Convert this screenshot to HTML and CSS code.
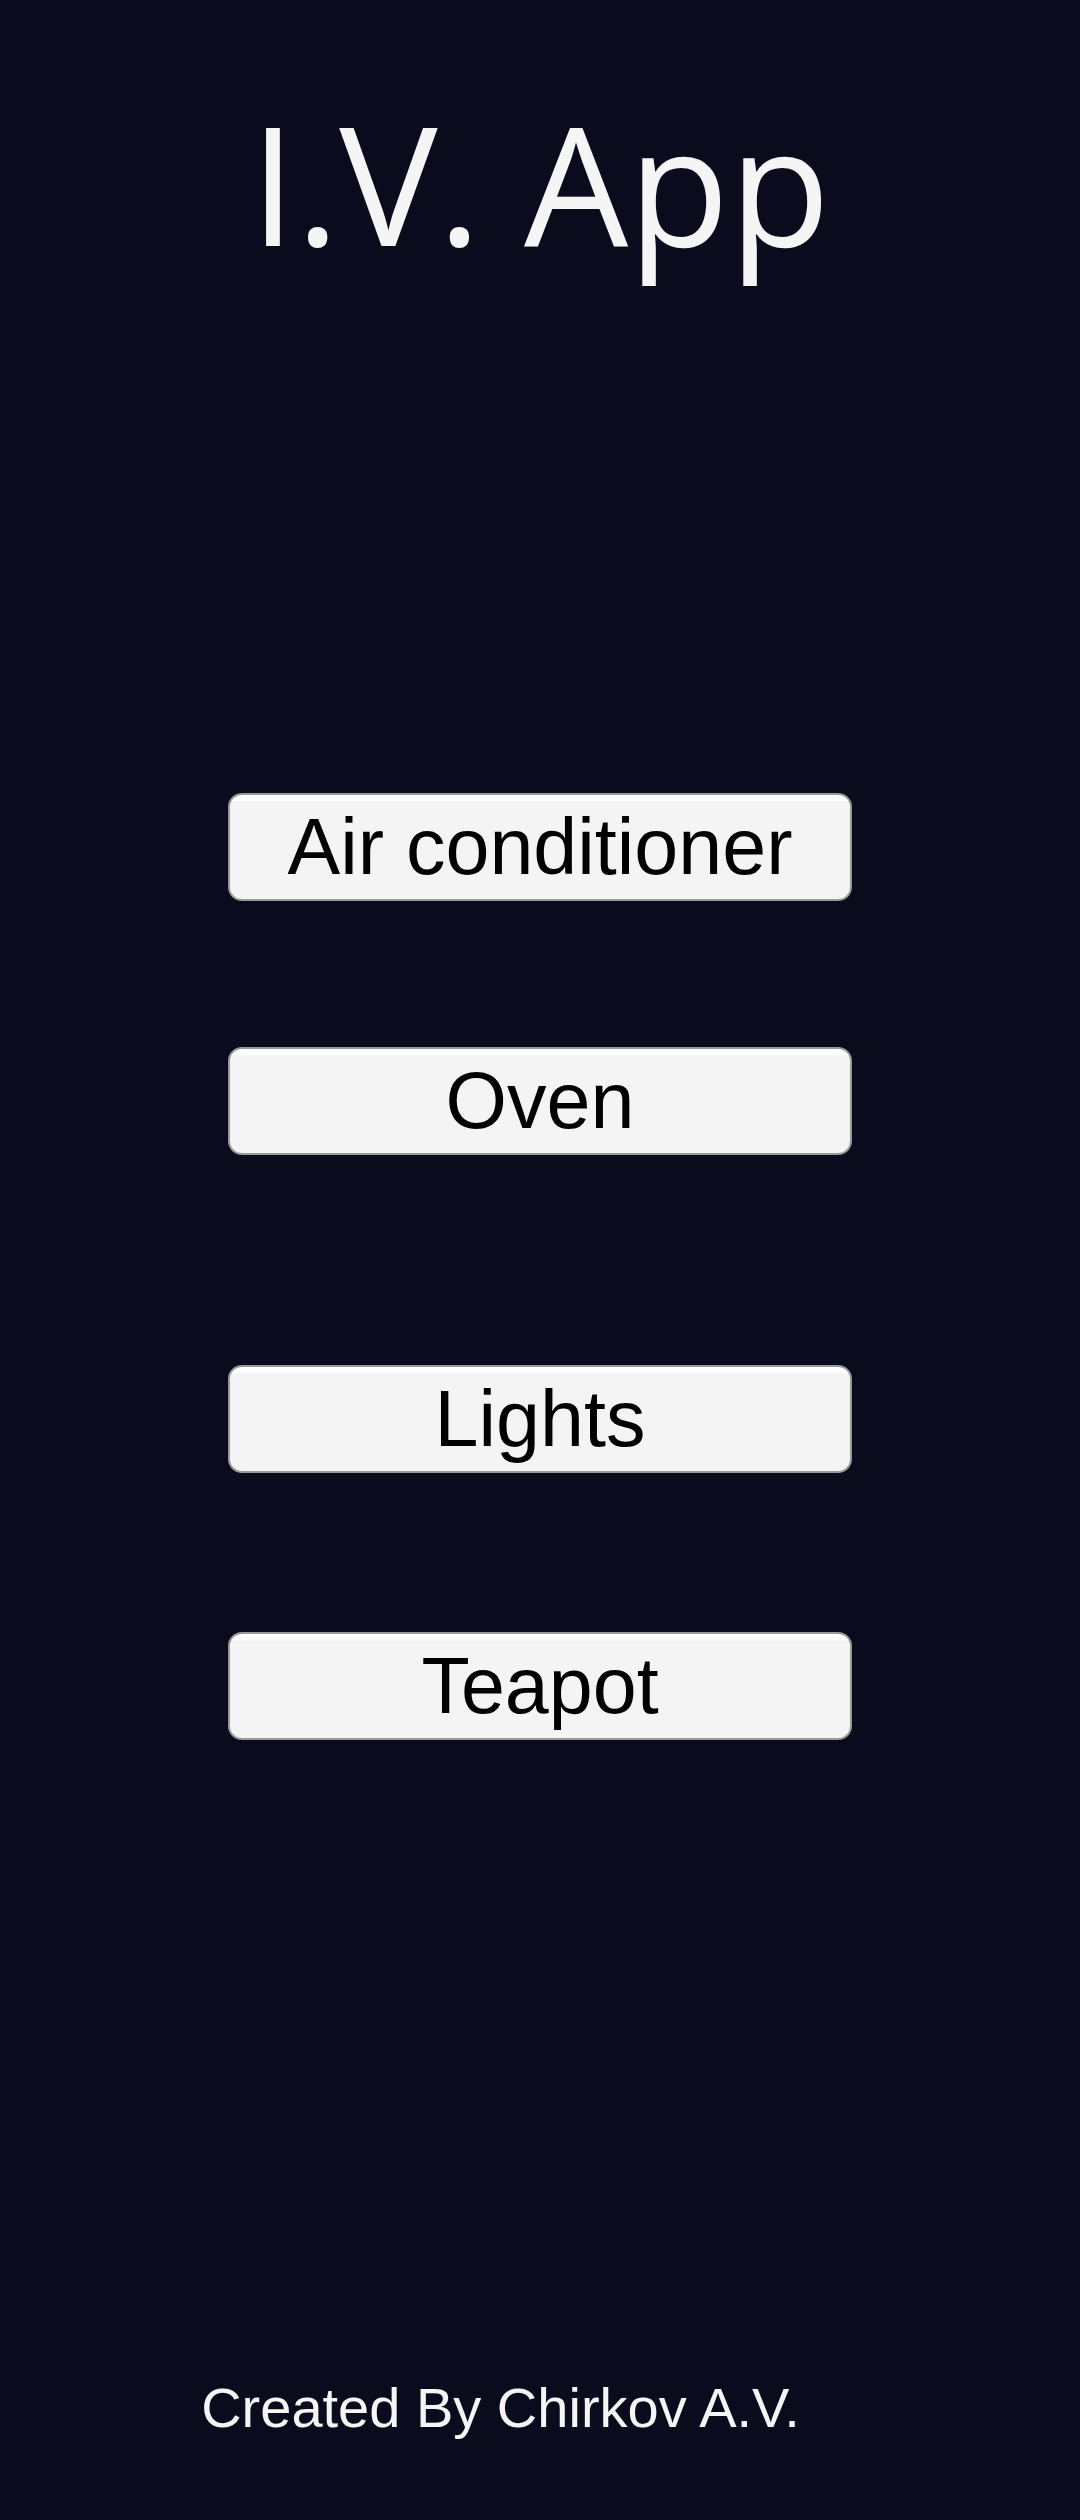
FILE: index.html
```html
<!DOCTYPE html>
<html lang="en">
<head>
<meta charset="utf-8">
<title>I.V. App</title>
<link rel="stylesheet" href="styles.css">
</head>
<body>
<main class="app">
  <h1 class="title">I.V. App</h1>
  <div class="devices">
    <button class="device device-ac">Air conditioner</button>
    <button class="device device-oven">Oven</button>
    <button class="device device-lights">Lights</button>
    <button class="device device-teapot">Teapot</button>
  </div>
  <footer class="footer">Created By Chirkov A.V.</footer>
</main>
</body>
</html>
```
FILE: styles.css
```css
html, body {
  margin: 0;
  padding: 0;
  background: #0a0c1e;
}

.app {
  min-height: 2520px;
  display: flex;
  flex-direction: column;
  align-items: center;
}

.title {
  margin: 100px 0 0 0;
  font-family: "Open Sans", "Noto Sans", sans-serif;
  font-weight: 400;
  font-size: 165px;
  line-height: 165px;
  color: #f5f5f5;
  white-space: nowrap;
}

.devices {
  display: flex;
  flex-direction: column;
  align-items: center;
  margin-top: 528px;
}

.device {
  box-sizing: border-box;
  width: 624px;
  height: 108px;
  padding: 0;
  border: 2px solid #9a9a9a;
  border-radius: 14px;
  background: linear-gradient(to bottom, #ffffff 0, #ffffff 5px, #f4f4f4 7px, #f4f4f4 100%);
  color: #000;
  font-family: "Liberation Sans", Arial, sans-serif;
  font-size: 79px;
  line-height: 104px;
  text-align: center;
  cursor: pointer;
}

.device-oven { margin-top: 146px; }
.device-lights { margin-top: 210px; }
.device-teapot { margin-top: 159px; }

.footer {
  margin-top: auto;
  margin-bottom: 84px;
  padding-right: 79px;
  font-family: "Liberation Sans", Arial, sans-serif;
  font-size: 56px;
  line-height: 56px;
  color: #f5f5f5;
  white-space: nowrap;
}
```
